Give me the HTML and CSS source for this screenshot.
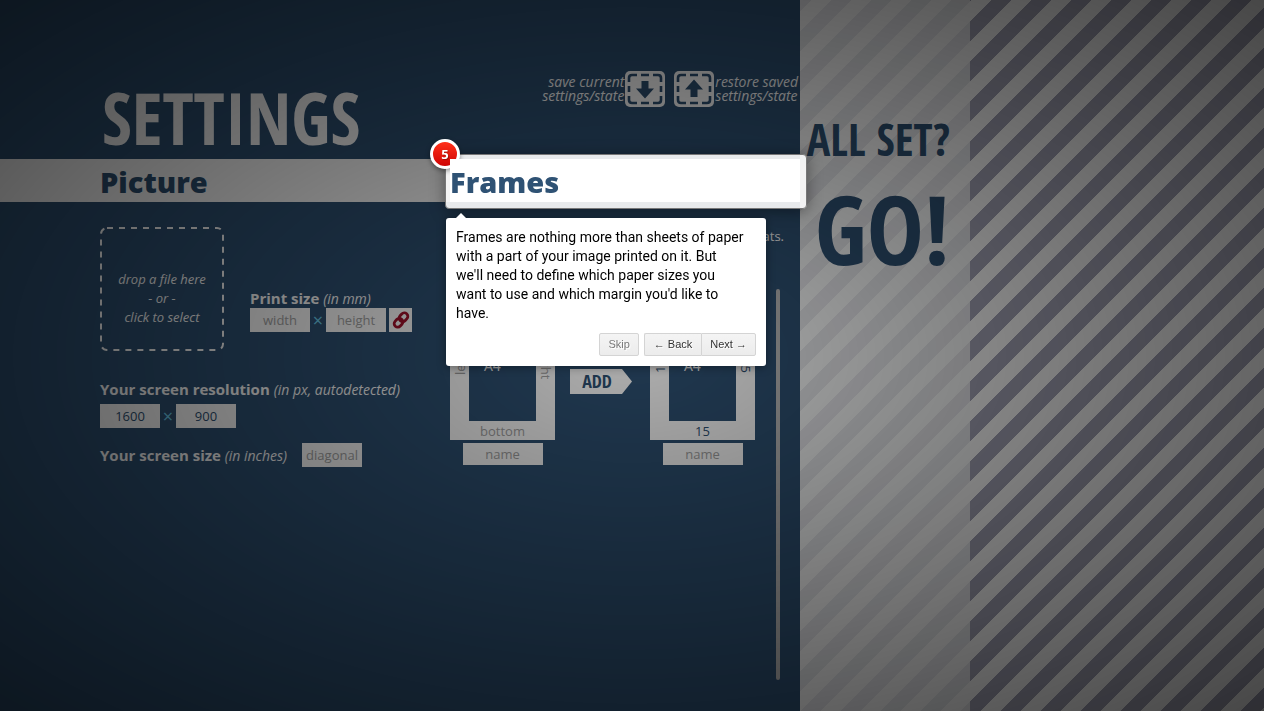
FILE: index.html
```html
<!DOCTYPE html>
<html lang="en">
<head>
<meta charset="utf-8">
<title>Settings</title>
<link rel="stylesheet" href="styles.css">
</head>
<body>
<div class="page">
  <main class="settings">
    <header class="top">
      <h1>SETTINGS</h1>
      <div class="state">
        <button class="state-btn save" type="button">
          <span>save current<br>settings/state</span>
          <svg width="40" height="36" viewBox="0 0 40 36" aria-hidden="true">
            <rect width="40" height="36" rx="5" fill="#fff"/>
            <path d="M4 11V7Q4 4 7 4H12M16 4H24M28 4H33Q36 4 36 7V11M36 15V21M36 25V29Q36 32 33 32H28M24 32H16M12 32H7Q4 32 4 29V25M4 21V15" fill="none" stroke="#2f5274" stroke-width="2.600"/>
            <path d="M16.500 10H23.500V17.500H29L20 27.500L11 17.500H16.500Z" fill="#2f5274"/>
          </svg>
        </button>
        <button class="state-btn restore" type="button">
          <svg width="40" height="36" viewBox="0 0 40 36" aria-hidden="true">
            <rect width="40" height="36" rx="5" fill="#fff"/>
            <path d="M4 11V7Q4 4 7 4H12M16 4H24M28 4H33Q36 4 36 7V11M36 15V21M36 25V29Q36 32 33 32H28M24 32H16M12 32H7Q4 32 4 29V25M4 21V15" fill="none" stroke="#2f5274" stroke-width="2.600"/>
            <path d="M16.500 26H23.500V18.500H29L20 8.500L11 18.500H16.500Z" fill="#2f5274"/>
          </svg>
          <span>restore saved<br>settings/state</span>
        </button>
      </div>
    </header>

    <div class="titles">
      <h2>Picture</h2>
      <div class="tour">
        <div class="tour-helper"><span class="tour-number">5</span></div>
        <h2 class="tour-target">Frames</h2>
        <div class="tooltip" role="dialog" aria-label="Frames">
          <p>Frames are nothing more than sheets of paper<br>with a part of your image printed on it. But<br>we'll need to define which paper sizes you<br>want to use and which margin you'd like to<br>have.</p>
          <div class="tooltip-buttons">
            <button class="tip-btn skip" type="button">Skip</button>
            <div class="pair">
              <button class="tip-btn" type="button">← Back</button>
              <button class="tip-btn" type="button">Next →</button>
            </div>
          </div>
        </div>
      </div>
    </div>

    <div class="columns">
      <section class="picture">
        <div class="source">
          <button class="drop" type="button">
            <svg class="drop-edge" viewBox="0 0 124 124" aria-hidden="true"><rect x="1" y="1" width="122" height="122" rx="6" fill="none" stroke="#fff" stroke-width="2" stroke-dasharray="6 6"/></svg>
            <span>drop a file here<br>- or -<br>click to select</span>
          </button>
          <div class="field">
            <label for="pw">Print size <em>(in mm)</em></label>
            <div class="pairing">
              <input id="pw" class="box" type="text" placeholder="width">
              <span class="times">×</span>
              <input class="box" type="text" placeholder="height" aria-label="Print height">
              <button class="link" type="button" aria-label="Keep proportions">
                <svg width="18" height="18" viewBox="0 0 18 18" aria-hidden="true">
                  <g fill="none" stroke="#a3122c" stroke-width="2.800" transform="rotate(-48 9 9)">
                    <rect x="0.500" y="5.500" width="9.500" height="7" rx="3.500"/>
                    <rect x="8" y="5.500" width="9.500" height="7" rx="3.500"/>
                  </g>
                </svg>
              </button>
            </div>
          </div>
        </div>
        <div class="field resolution">
          <label for="rw">Your screen resolution <em>(in px, autodetected)</em></label>
          <div class="pairing">
            <input id="rw" class="box" type="text" value="1600">
            <span class="times">×</span>
            <input class="box" type="text" value="900" aria-label="Screen height">
          </div>
        </div>
        <div class="field-row">
          <label for="dg">Your screen size <em>(in inches)</em></label>
          <input id="dg" class="box" type="text" placeholder="diagonal">
        </div>
      </section>

      <section class="frames">
        <p class="hint">formats.</p>
        <div class="frame-list">
          <div class="frame">
            <div class="sheet">
              <input class="margin m-top" type="text" placeholder="top" aria-label="Top margin">
              <input class="margin m-left" type="text" placeholder="left" aria-label="Left margin">
              <span class="size">A4</span>
              <input class="margin m-right" type="text" placeholder="right" aria-label="Right margin">
              <input class="margin m-bottom" type="text" placeholder="bottom" aria-label="Bottom margin">
            </div>
            <input class="name" type="text" placeholder="name" aria-label="Frame name">
          </div>
          <button class="add" type="button">ADD</button>
          <div class="frame">
            <div class="sheet">
              <input class="margin m-top" type="text" value="15" aria-label="Top margin">
              <input class="margin m-left" type="text" value="15" aria-label="Left margin">
              <span class="size">A4</span>
              <input class="margin m-right" type="text" value="15" aria-label="Right margin">
              <input class="margin m-bottom" type="text" value="15" aria-label="Bottom margin">
            </div>
            <input class="name" type="text" placeholder="name" aria-label="Frame name">
          </div>
          <span class="scrollbar"></span>
        </div>
      </section>
    </div>
  </main>

  <aside class="go">
    <p>ALL SET?</p>
    <button type="button">GO!</button>
  </aside>
</div>
<div class="overlay"></div>
</body>
</html>
```
FILE: styles.css
```css
:root {
  --blue: #2f5274;
  --display: "Open Sans Condensed", "Roboto Condensed", "Open Sans", sans-serif;
  --text: "Open Sans", "Noto Sans", sans-serif;
}

* { box-sizing: border-box; }

body {
  margin: 0;
  color: #fff;
  font: 14px/19px var(--text);
  background: #fff;
}

h1, h2, p { margin: 0; }

button, input {
  margin: 0;
  padding: 0;
  border: 0;
  border-radius: 0;
  background: none;
  color: inherit;
  font: inherit;
}

.page {
  display: grid;
  grid-template-columns: 800fr 170px 294fr;
  min-height: 100vh;
  background: linear-gradient(135deg, #a6a6b9 25%, #fff 25% 50%, #a6a6b9 50% 75%, #fff 75%) 32px 0 / 40px 40px;
}

.overlay {
  position: fixed;
  inset: 0;
  z-index: 10;
  opacity: .8;
  background: radial-gradient(ellipse farthest-corner at center, rgba(0, 0, 0, .4), rgba(0, 0, 0, .9));
  pointer-events: none;
}

/* Settings column */
.settings {
  display: flex;
  flex-direction: column;
  min-width: 0;
  background: var(--blue);
}

.top {
  display: flex;
  justify-content: space-between;
  height: 159px;
  padding-left: 102px;
}

h1 {
  align-self: flex-end;
  color: #fff;
  font: bold 72px/84px var(--display);
}

.state {
  display: flex;
  gap: 9px;
  align-self: flex-start;
  padding: 71px 2px 0 0;
}

.state-btn {
  display: flex;
  align-items: center;
  gap: 1px;
  font-style: italic;
  line-height: 14px;
}

.save { text-align: right; }
.restore { text-align: left; }

.titles {
  display: grid;
  grid-template-columns: 1fr 1fr;
  padding-left: 100px;
  background: #fff;
}

h2 {
  height: 43px;
  color: var(--blue);
  font: 800 29px/46px var(--text);
}

.tour { position: relative; }

.tour-helper {
  position: absolute;
  z-index: 11;
  inset: -5px -7px -7px -5px;
  border: 1px solid #777;
  border-radius: 4px;
  background: rgba(255, 255, 255, .9);
  box-shadow: 0 2px 15px rgba(0, 0, 0, .4);
}

.tour-number {
  position: absolute;
  top: -16px;
  left: -16px;
  width: 30px;
  height: 30px;
  border: 3px solid #fff;
  border-radius: 50%;
  background: linear-gradient(#ff3019, #cf0404);
  box-shadow: 0 2px 5px rgba(0, 0, 0, .4);
  font: bold 13px/24px "Open Sans", sans-serif;
  text-align: center;
  text-shadow: 1px 1px 1px rgba(0, 0, 0, .3);
}

.tour-target {
  position: relative;
  z-index: 12;
  background: #fff;
}

.tooltip {
  position: absolute;
  z-index: 13;
  top: 59px;
  left: -4px;
  width: 320px;
  padding: 10px;
  border-radius: 3px;
  background: #fff;
  box-shadow: 0 1px 10px rgba(0, 0, 0, .4);
  color: #000;
  font: 14px/19px Roboto, sans-serif;
}

.tooltip::before {
  content: "";
  position: absolute;
  top: -10px;
  left: 10px;
  border: 5px solid transparent;
  border-bottom-color: #fff;
}

.tooltip-buttons {
  display: flex;
  justify-content: flex-end;
  gap: 5px;
  padding-top: 10px;
}

.pair { display: flex; }

.tip-btn {
  height: 23px;
  padding: 0 9px;
  border: 1px solid #d4d4d4;
  border-radius: 2px;
  background: linear-gradient(#f4f4f4, #ececec);
  color: #333;
  font: 11px/19px "Liberation Sans", sans-serif;
  text-shadow: 1px 1px 0 #fff;
}

.skip {
  padding: 0 8px;
  color: #7a7a7a;
}

.pair .tip-btn:first-child {
  border-right: 0;
  border-radius: 2px 0 0 2px;
}

.pair .tip-btn:last-child {
  padding: 0 8px;
  border-radius: 0 2px 2px 0;
}

/* Two columns below the titles */
.columns {
  display: grid;
  flex: 1;
  grid-template-columns: 1fr 1fr;
  padding-left: 100px;
}

.picture { padding-top: 25px; }

.source {
  display: flex;
  gap: 26px;
}

.drop {
  position: relative;
  width: 124px;
  height: 124px;
  padding-top: 18px;
  font-size: 13px;
  font-style: italic;
}

.drop-edge {
  position: absolute;
  inset: 0;
}

label {
  display: block;
  font-size: 15px;
  font-weight: bold;
  white-space: nowrap;
}

label em {
  font-size: 14px;
  font-weight: normal;
}

.source .field { padding-top: 62px; }

.pairing { display: flex; }

.box {
  width: 60px;
  height: 24px;
  background: #fff;
  color: var(--blue);
  font-size: 13px;
  text-align: center;
}

input::placeholder {
  color: #a5a5a5;
  opacity: 1;
}

.times {
  width: 16px;
  color: #6cd0f0;
  font-size: 18px;
  line-height: 25px;
  text-align: center;
}

.link {
  display: grid;
  place-items: center;
  width: 23px;
  height: 24px;
  margin-left: 3px;
  background: #fff;
}

.resolution { padding-top: 29px; }
.resolution .pairing { padding-top: 5px; }

.field-row {
  display: flex;
  align-items: center;
  gap: 15px;
  padding-top: 14px;
}

/* Frames */
.frames {
  display: flex;
  flex-direction: column;
}

.hint {
  padding: 25px 16px 0 0;
  font-size: 13px;
  line-height: 18px;
  text-align: right;
}

.frame-list {
  position: relative;
  display: flex;
  flex: 1;
  align-items: flex-start;
  margin: 44px 20px 31px 0;
  padding-top: 2px;
}

.frame {
  display: flex;
  flex-direction: column;
  align-items: center;
  gap: 3px;
}

.sheet {
  display: grid;
  grid-template-columns: 19px 67px 19px;
  grid-template-rows: 19px 111px 19px;
  background: #fff;
}

.margin {
  width: 100%;
  min-width: 0;
  height: 100%;
  color: var(--blue);
  font-size: 13px;
  line-height: 19px;
  text-align: center;
}

.m-top, .m-bottom { grid-column: 1 / -1; }

.m-left, .m-right { writing-mode: vertical-rl; }

.m-left { transform: rotate(180deg); }

.size {
  padding: 46px 0 0 15px;
  background: var(--blue);
}

.name {
  width: 80px;
  height: 22px;
  background: #fff;
  color: var(--blue);
  font-size: 13px;
  text-align: center;
}

.add {
  width: 62px;
  height: 25px;
  margin: 78px 18px 0 15px;
  padding-right: 8px;
  background: #fff;
  clip-path: polygon(0 0, 52px 0, 100% 50%, 52px 100%, 0 100%);
  color: var(--blue);
  font: bold 18px/25px var(--display);
}

.scrollbar {
  position: absolute;
  top: 0;
  right: 0;
  bottom: 0;
  width: 4px;
  border-radius: 2px;
  background: #bbb;
}

/* Start panel */
.go {
  display: flex;
  flex-direction: column;
  align-items: flex-end;
  padding: 109px 20px 0 0;
  background: rgba(251, 253, 253, .8);
  color: var(--blue);
}

.go p {
  font: bold 44px/60px var(--display);
}

.go button {
  font: bold 96px/118px var(--display);
}
```
